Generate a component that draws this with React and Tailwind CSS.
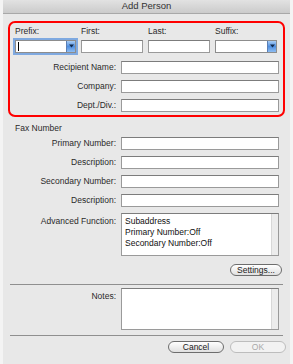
import React from 'react';

const font = "font-['Liberation_Sans',Arial,sans-serif]";

function TextBox({ className = '' }) {
  return <div className={`h-[13px] bg-white border border-[#9a9a9a] border-t-[#7c7c7c] ${className}`} />;
}

function Popup({ focused }) {
  return (
    <div className={`relative h-[13px] bg-white border border-[#8d8d8d] flex items-center ${focused ? 'shadow-[0_0_0_2px_#7fa9e0]' : ''}`}>
      {focused && <div className="ml-[2px] w-px h-[9px] bg-black" />}
      <div className="absolute right-0 top-0 bottom-0 w-[9px] bg-gradient-to-b from-[#a9cdf5] via-[#4f8fe0] to-[#8ebdf2] flex items-center justify-center border-l border-[#5a7fb5]">
        <svg width="5" height="4" viewBox="0 0 5 4"><path d="M0 0.5h5L2.5 3.5z" fill="#10284a" /></svg>
      </div>
    </div>
  );
}

function Row({ label, children, top }) {
  return (
    <div className={`flex ${top ? 'items-start' : 'items-center'} gap-[5px]`}>
      <div className={`w-[106px] text-right text-[#2a2a2a] ${top ? 'pt-[2px]' : ''}`}>{label}</div>
      <div className="w-[158px]">{children}</div>
    </div>
  );
}

function ScrollBox({ h, children }) {
  return (
    <div className={`${h} bg-white border border-[#9a9a9a] border-t-[#7c7c7c] flex`}>
      <div className="flex-1 pl-[3px] pt-[2px] leading-[11px] text-[#111]">{children}</div>
      <div className="w-[7px] bg-[#ececec] border-l border-[#d8d8d8]" />
    </div>
  );
}

function Pill({ children, disabled, className = '' }) {
  return (
    <div
      className={`h-[12px] rounded-full border flex items-center justify-center leading-none ${
        disabled
          ? 'border-[#bdbdbd] text-[#a9a9a9] bg-[#f2f2f2]'
          : 'border-[#6d6d6d] text-[#1a1a1a] bg-gradient-to-b from-white to-[#e0e0e0]'
      } ${className}`}
    >
      {children}
    </div>
  );
}

export default function App() {
  return (
    <div className={`w-[293px] h-[364px] bg-[#f4f4f4] px-[3px] text-[8.5px] ${font}`}>
      <div className="h-full bg-[#e8e8e8] flex flex-col">
        <div className="h-[14px] shrink-0 bg-gradient-to-b from-[#e2e2e2] to-[#cbcbcb] border-b border-[#a8a8a8] flex items-center justify-center text-[9.5px] text-[#333]">
          Add Person
        </div>

        <div className="mx-[5px] mt-[7px] h-[96px] border-2 border-[#ff0000] rounded-[7px] pl-[5px] pt-[2px]">
          <div className="grid grid-cols-[61px_62px_62px_62px] gap-x-[5px] text-[#2a2a2a]">
            <div>Prefix:</div>
            <div>First:</div>
            <div>Last:</div>
            <div>Suffix:</div>
          </div>
          <div className="grid grid-cols-[61px_62px_62px_62px] gap-x-[5px] mt-[2px]">
            <Popup focused />
            <TextBox />
            <TextBox />
            <Popup />
          </div>
          <div className="-ml-[5px] mt-[8px] flex flex-col gap-[6px]">
            <Row label="Recipient Name:"><TextBox /></Row>
            <Row label="Company:"><TextBox /></Row>
            <Row label="Dept./Div.:"><TextBox /></Row>
          </div>
        </div>

        <div className="pl-[12px] mt-[5px] text-[#2a2a2a]">Fax Number</div>
        <div className="pl-[7px] mt-[2px] flex flex-col gap-[6px]">
          <Row label="Primary Number:"><TextBox /></Row>
          <Row label="Description:"><TextBox /></Row>
          <Row label="Secondary Number:"><TextBox /></Row>
          <Row label="Description:"><TextBox /></Row>
          <Row label="Advanced Function:" top>
            <ScrollBox h="h-[43px]">
              <div>Subaddress</div>
              <div>Primary Number:Off</div>
              <div>Secondary Number:Off</div>
            </ScrollBox>
          </Row>
        </div>
        <div className="flex justify-end pr-[8px] mt-[8px]">
          <Pill className="w-[52px]">Settings...</Pill>
        </div>
        <div className="mx-[7px] mt-[8px] h-px bg-[#8f8f8f]" />
        <div className="pl-[7px] mt-[3px]">
          <Row label="Notes:" top>
            <ScrollBox h="h-[42px]" />
          </Row>
        </div>
        <div className="mx-[7px] mt-[5px] h-px bg-[#8f8f8f]" />
        <div className="flex justify-end gap-[6px] pr-[4px] mt-[5px]">
          <Pill className="w-[56px]">Cancel</Pill>
          <Pill disabled className="w-[56px]">OK</Pill>
        </div>
      </div>
    </div>
  );
}
